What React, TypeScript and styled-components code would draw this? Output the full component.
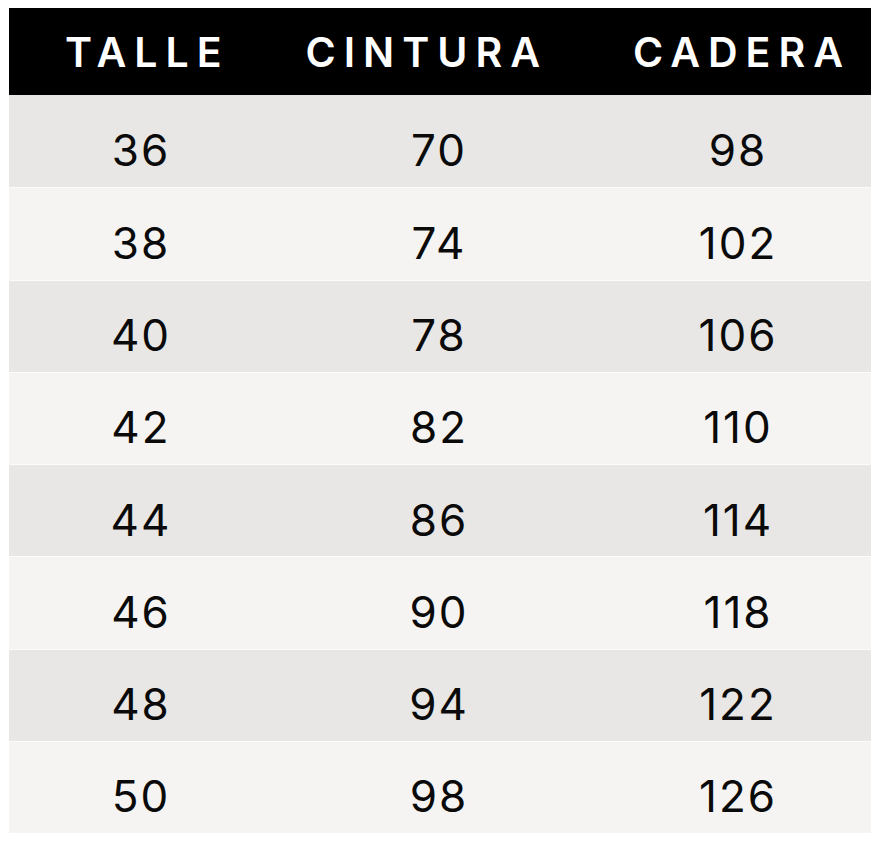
import React from "react";
import styled, { createGlobalStyle } from "styled-components";

const Global = createGlobalStyle`
  html, body { margin: 0; padding: 0; background: #ffffff; }
  body { font-family: Inter, "Liberation Sans", sans-serif; }
`;

const Page = styled.div`
  padding: 8px 15px 0 9px;
  width: 862px;
`;

const Table = styled.div`
  display: flex;
  flex-direction: column;
  width: 862px;
`;

const HeaderRow = styled.div`
  display: flex;
  align-items: center;
  gap: 76px;
  height: 87px;
  background: #000000;
  padding: 2px 20px 0 56px;
  box-sizing: border-box;
`;

const HeaderCell = styled.div`
  color: #ffffff;
  font-family: Inter, "Liberation Sans", sans-serif;
  font-weight: 600;
  font-size: 41px;
  letter-spacing: 8px;
  line-height: 1;

  &:last-child {
    margin-left: auto;
  }
`;

const Row = styled.div<{ $shade: boolean; $first: boolean }>`
  display: grid;
  grid-template-columns: 264px 332px 1fr;
  align-items: center;
  height: 92.25px;
  box-sizing: border-box;
  padding-top: 18px;
  background: ${(p) => (p.$shade ? "#e8e7e5" : "#f5f4f2")};
  border-top: ${(p) => (p.$first ? "none" : "1px solid #fbfbfa")};
`;

const Cell = styled.div`
  text-align: center;
  color: #0a0a0a;
  font-family: Inter, "Liberation Sans", sans-serif;
  font-weight: 400;
  font-size: 44px;
  letter-spacing: 2px;
  line-height: 1;
`;

const rows = [
  [36, 70, 98],
  [38, 74, 102],
  [40, 78, 106],
  [42, 82, 110],
  [44, 86, 114],
  [46, 90, 118],
  [48, 94, 122],
  [50, 98, 126],
];

export default function App() {
  return (
    <>
      <Global />
      <Page>
        <Table>
          <HeaderRow>
            <HeaderCell>TALLE</HeaderCell>
            <HeaderCell>CINTURA</HeaderCell>
            <HeaderCell>CADERA</HeaderCell>
          </HeaderRow>
          {rows.map((r, i) => (
            <Row key={i} $shade={i % 2 === 0} $first={i === 0}>
              {r.map((v, j) => (
                <Cell key={j}>{v}</Cell>
              ))}
            </Row>
          ))}
        </Table>
      </Page>
    </>
  );
}
